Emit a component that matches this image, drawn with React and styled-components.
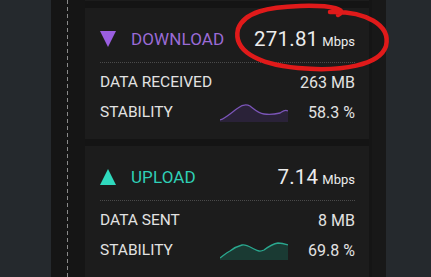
import React from 'react'
import styled, { createGlobalStyle } from 'styled-components'

const Global = createGlobalStyle`
    html,body{
        margin:0;
        padding:0;
        background:#25292d;
    }
    body{
        font-family:Roboto, "Liberation Sans", sans-serif;
        -webkit-font-smoothing:antialiased;
    }
`

const Screen = styled.div`
    width:431px;
    height:277px;
    overflow:hidden;
    display:flex;
    background:#25292d;
    position:relative;
`

const Gutter = styled.div`
    width:34px;
    margin-left:51px;
    background:#151515;
    display:flex;
    justify-content:center;

    .dash{
        width:1px;
        margin-left:-1px;
        height:100%;
        background:repeating-linear-gradient(to bottom,#8a8a8a 0 4px,transparent 4px 7px);
    }
`

const Column = styled.div`
    width:284px;
    background:#141414;
    display:flex;
    flex-direction:column;
    gap:7px;
`

const RightEdge = styled.div`
    width:14px;
    background:#181818;
    border-left:3px solid #151515;
`

const Tail = styled.div`
    height:1px;
    background:#1c1c1c;
`

const Card = styled.section`
    background:#1c1c1c;
    height:131px;
    flex-shrink:0;
    padding:15px 14px 0 15px;
    box-sizing:border-box;
`

const Header = styled.div`
    display:flex;
    align-items:center;
    height:32px;
    padding-bottom:7px;
    border-bottom:1px dotted #4a4a4a;
`

const Tri = styled.div`
    width:0;
    height:0;
    border-left:8.5px solid transparent;
    border-right:8.5px solid transparent;
    ${props => props.up
        ? `border-bottom:16px solid ${props.color};`
        : `border-top:16px solid ${props.color};`}
    margin-right:15px;
`

const Title = styled.span`
    font-size:17px;
    color:${props => props.color};
    letter-spacing:0.1px;
    flex:1;
`

const Speed = styled.span`
    font-size:20.5px;
    color:#ececec;
    letter-spacing:0.2px;

    small{
        font-size:13px;
        margin-left:4px;
        letter-spacing:0;
    }
`

const Stats = styled.div`
    padding-top:4px;
`

const Row = styled.div`
    display:grid;
    grid-template-columns:1fr 68px 67px;
    align-items:center;
    height:30px;
    color:#e2e2e2;

    .label{
        font-size:15.5px;
    }
    .value{
        font-size:16px;
        text-align:right;
    }
`

const Overlay = styled.svg`
    position:absolute;
    left:0;
    top:0;
    pointer-events:none;
`

const Spark = ({ d, color, fill }) => (
    <svg width='68' height='20' viewBox='0 0 68 20' style={{ display: 'block' }}>
        <path d={d + ' L68 20 L0 20 Z'} fill={fill} />
        <path d={d} fill='none' stroke={color} strokeWidth='1.3' />
    </svg>
)

const downPath = 'M0 18 C6 16 12 10 18 6 C22 3 26 2 30 4 C34 7 38 11 44 12 C50 13 56 12 60 11 C63 9 65 7 68 9'
const upPath = 'M0 18 C3 16 6 13 10 11 C14 8 18 6 22 5 C26 4 30 7 34 9 C38 11 40 12 44 10 C48 7 52 4 58 3 C62 3 65 4 68 5'

const Stat = ({ label, value, spark }) => (
    <Row>
        <span className='label'>{label}</span>
        <span>{spark}</span>
        <span className='value'>{value}</span>
    </Row>
)

const App = () => {
    return (
        <>
            <Global />
            <Screen>
                <Gutter><div className='dash'></div></Gutter>
                <Column>
                    <Tail />
                    <Card>
                        <Header>
                            <Tri color='#9a5ee0' />
                            <Title color='#9a6bd6'>DOWNLOAD</Title>
                            <Speed>271.81<small>Mbps</small></Speed>
                        </Header>
                        <Stats>
                            <Stat label='DATA RECEIVED' value='263 MB' />
                            <Stat label='STABILITY' value='58.3 %'
                                spark={<Spark d={downPath} color='#7b55b8' fill='#2a2238' />} />
                        </Stats>
                    </Card>
                    <Card>
                        <Header>
                            <Tri up color='#2fd9bd' />
                            <Title color='#2fcfb6'>UPLOAD</Title>
                            <Speed>7.14<small>Mbps</small></Speed>
                        </Header>
                        <Stats>
                            <Stat label='DATA SENT' value='8 MB' />
                            <Stat label='STABILITY' value='69.8 %'
                                spark={<Spark d={upPath} color='#2aa88f' fill='#1a3a33' />} />
                        </Stats>
                    </Card>
                </Column>
                <RightEdge />
                <Overlay width='431' height='277' viewBox='0 0 431 277'>
                    <path
                        d='M338 15 C348 10 334 5 300 6 C268 7 244 12 238 29 C233 50 256 64 298 68 C342 72 380 65 386 46 C391 25 366 11 330 12'
                        fill='none' stroke='#e01a1a' strokeWidth='4.5' strokeLinecap='round' />
                </Overlay>
            </Screen>
        </>
    )
}

export default App
